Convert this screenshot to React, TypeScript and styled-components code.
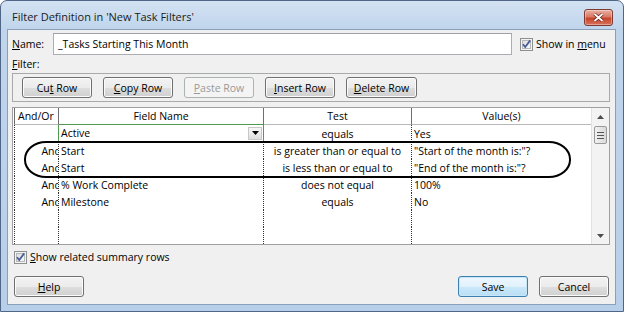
import React from "react";
import styled, { createGlobalStyle, css } from "styled-components";

const GlobalStyle = createGlobalStyle`
  html, body { margin: 0; padding: 0; background: #ffffff; }
  body {
    font-family: "Open Sans", "Noto Sans", "DejaVu Sans", sans-serif;
    font-size: 10.5px;
    color: #000;
  }
  * { box-sizing: border-box; }
`;

interface Row {
  andOr: string;
  field: string;
  test: string;
  value: string;
  active?: boolean;
}

const rows: Row[] = [
  { andOr: "", field: "Active", test: "equals", value: "Yes", active: true },
  { andOr: "And", field: "Start", test: "is greater than or equal to", value: "\"Start of the month is:\"?" },
  { andOr: "And", field: "Start", test: "is less than or equal to", value: "\"End of the month is:\"?" },
  { andOr: "And", field: "% Work Complete", test: "does not equal", value: "100%" },
  { andOr: "And", field: "Milestone", test: "equals", value: "No" },
  { andOr: "", field: "", test: "", value: "" },
  { andOr: "", field: "", test: "", value: "" },
];

const Checkbox = () => (
  <svg width="13" height="13" viewBox="0 0 13 13">
    <defs>
      <linearGradient id="cbg" x1="0" y1="0" x2="1" y2="1">
        <stop offset="0" stopColor="#dcdcdc" />
        <stop offset="1" stopColor="#fbfbfb" />
      </linearGradient>
    </defs>
    <rect x="0.5" y="0.5" width="12" height="12" fill="#f4f4f4" stroke="#8e8f8f" />
    <rect x="2.5" y="2.5" width="8" height="8" fill="url(#cbg)" stroke="#b5b8bc" />
    <path d="M3 6.2 L5.2 9 L10.2 2.4" fill="none" stroke="#4a5f97" strokeWidth="1.8" />
  </svg>
);

const App = () => {
  return (
    <>
      <GlobalStyle />
      <Window>
        <TitleBar>
          <Title>Filter Definition in 'New Task Filters'</Title>
          <CloseButton>
            <svg width="11" height="9" viewBox="0 0 11 9">
              <path d="M1.5 1 L9.5 8 M9.5 1 L1.5 8" stroke="#5a1a12" strokeWidth="3.2" />
              <path d="M1.5 1 L9.5 8 M9.5 1 L1.5 8" stroke="#ffffff" strokeWidth="1.8" />
            </svg>
          </CloseButton>
        </TitleBar>
        <Body>
          <NameRow>
            <NameLabel><Key>N</Key>ame:</NameLabel>
            <NameInput>_Tasks Starting This Month</NameInput>
            <CheckLabel $ml={8}>
              <Checkbox />
              <span>Show in <Key>m</Key>enu</span>
            </CheckLabel>
          </NameRow>
          <FilterLabel><Key>F</Key>ilter:</FilterLabel>
          <Toolbar>
            <Button><span>Cu<Key>t</Key> Row</span></Button>
            <Button><span><Key>C</Key>opy Row</span></Button>
            <Button $disabled><span><Key>P</Key>aste Row</span></Button>
            <Button><span><Key>I</Key>nsert Row</span></Button>
            <Button $w={71}><span><Key>D</Key>elete Row</span></Button>
          </Toolbar>
          <GridBox>
            <Table>
              <HeadCell $align="left" $first>And/Or</HeadCell>
              <HeadCell $green>Field Name</HeadCell>
              <HeadCell>Test</HeadCell>
              <HeadCell $last>Value(s)</HeadCell>
              {rows.map((r, i) => (
                <React.Fragment key={i}>
                  <AndCell>
                    <span>{r.andOr}</span>
                  </AndCell>
                  {r.active ? (
                    <ActiveCell>
                      <span>{r.field}</span>
                      <DropButton>
                        <svg width="7" height="4" viewBox="0 0 7 4">
                          <path d="M0 0 H7 L3.5 4 Z" fill="#000" />
                        </svg>
                      </DropButton>
                    </ActiveCell>
                  ) : (
                    <Cell>{r.field}</Cell>
                  )}
                  <Cell $align="center">{r.test}</Cell>
                  <Cell $last>{r.value}</Cell>
                </React.Fragment>
              ))}
            </Table>
            <ScrollBar>
              <ScrollArrow>
                <svg width="7" height="4" viewBox="0 0 7 4">
                  <path d="M0 4 H7 L3.5 0 Z" fill="#4d4d4d" />
                </svg>
              </ScrollArrow>
              <Thumb>
                <Grip />
                <Grip />
                <Grip />
              </Thumb>
              <Spacer />
              <ScrollArrow>
                <svg width="7" height="4" viewBox="0 0 7 4">
                  <path d="M0 0 H7 L3.5 4 Z" fill="#4d4d4d" />
                </svg>
              </ScrollArrow>
            </ScrollBar>
            <Highlight />
          </GridBox>
          <SummaryRow>
            <CheckLabel>
              <Checkbox />
              <span><Key>S</Key>how related summary rows</span>
            </CheckLabel>
          </SummaryRow>
          <Footer>
            <Button $w={70}><span><Key>H</Key>elp</span></Button>
            <FooterRight>
              <Button $w={70} $default>Save</Button>
              <Button $w={70}>Cancel</Button>
            </FooterRight>
          </Footer>
        </Body>
      </Window>
    </>
  );
};

export default App;

const Window = styled.div`
  width: 624px;
  height: 312px;
  display: flex;
  flex-direction: column;
  border: 1px solid #4f6686;
  border-radius: 7px 7px 0 0;
  padding: 0 7px 6px 6px;
  background: linear-gradient(#d3e2f3 0px, #c0d5ec 28px, #b8cfe9 100%);
`;

const TitleBar = styled.div`
  height: 28px;
  display: flex;
  align-items: flex-start;
  padding-left: 5px;
`;

const Title = styled.div`
  margin-top: 8px;
  font-size: 11px;
  color: #1b1b1b;
`;

const CloseButton = styled.div`
  margin-left: auto;
  margin-right: 3px;
  margin-top: 8px;
  width: 29px;
  height: 17px;
  border: 1px solid #7d3a30;
  border-radius: 3px;
  display: flex;
  align-items: center;
  justify-content: center;
  background: linear-gradient(#eab0a2 0%, #d97a66 45%, #c8432c 55%, #d9735a 100%);
  box-shadow: inset 0 0 0 1px rgba(255, 255, 255, 0.35);
`;

const Body = styled.div`
  flex: 1;
  display: flex;
  flex-direction: column;
  background: #f0f0f0;
  border: 1px solid #8a9fb9;
  padding: 3px 5px 7px 4px;
`;

const Key = styled.span`
  text-decoration: underline;
`;

const NameRow = styled.div`
  height: 22px;
  display: flex;
  align-items: center;
`;

const NameLabel = styled.div`
  width: 41px;
`;

const NameInput = styled.div`
  width: 459px;
  height: 22px;
  background: #fff;
  border: 1px solid #abadb3;
  border-top-color: #9da0a6;
  padding-left: 4px;
  display: flex;
  align-items: center;
`;

const CheckLabel = styled.label<{ $ml?: number }>`
  display: flex;
  align-items: center;
  gap: 3px;
  white-space: nowrap;
  margin-left: ${(p) => p.$ml ?? 0}px;
  svg { flex-shrink: 0; }
`;

const FilterLabel = styled.div`
  margin-top: 2px;
  height: 14px;
  line-height: 14px;
`;

const Toolbar = styled.div`
  margin-top: 2px;
  height: 29px;
  border: 1px solid #a9a9a9;
  display: flex;
  align-items: center;
  gap: 11px;
  padding: 0 9px;
`;

const Button = styled.div<{ $w?: number; $disabled?: boolean; $default?: boolean }>`
  width: ${(p) => p.$w ?? 70}px;
  height: 21px;
  border: 1px solid #707070;
  border-radius: 3px;
  display: flex;
  align-items: center;
  justify-content: center;
  white-space: nowrap;
  background: linear-gradient(#f3f3f3 0%, #ebebeb 50%, #dedede 51%, #d0d0d0 100%);
  box-shadow: inset 0 0 0 1px #fbfbfb;
  color: #000;
  ${(p) =>
    p.$disabled &&
    css`
      border-color: #adb2b5;
      background: #f4f4f4;
      color: #9a9a9a;
      box-shadow: none;
    `}
  ${(p) =>
    p.$default &&
    css`
      border-color: #3c7fb1;
      background: linear-gradient(#eef7fd 0%, #e1f1fc 50%, #cbe8fa 51%, #b9def5 100%);
      box-shadow: inset 0 0 0 1px #c7e6f8;
    `}
`;

const GridBox = styled.div`
  position: relative;
  margin-top: 5px;
  height: 138px;
  border: 1px solid #a0a0a0;
  background: #fff;
  display: flex;
  overflow: hidden;
`;

const Table = styled.div`
  flex: 1;
  display: grid;
  grid-template-columns: 45px 205px 148px 1fr;
  grid-auto-rows: 17px;
  padding-left: 1px;
  align-content: start;
`;

const HeadCell = styled.div<{ $align?: string; $first?: boolean; $last?: boolean; $green?: boolean }>`
  display: flex;
  align-items: center;
  justify-content: ${(p) => (p.$align === "left" ? "flex-start" : "center")};
  padding-left: ${(p) => (p.$align === "left" ? 3 : 0)}px;
  border-right: ${(p) => (p.$last ? "none" : "1px solid #6f6f6f")};
  border-left: ${(p) => (p.$first ? "1px solid #6f6f6f" : "none")};
  border-bottom: 1px solid ${(p) => (p.$green ? "#4f9a4f" : "#b8b8b8")};
  white-space: nowrap;
`;

const Cell = styled.div<{ $align?: string; $last?: boolean }>`
  display: flex;
  align-items: center;
  justify-content: ${(p) =>
    p.$align === "center" ? "center" : p.$align === "right" ? "flex-end" : "flex-start"};
  padding: 0 2px;
  border-right: ${(p) => (p.$last ? "none" : "1px dotted #333")};
  white-space: nowrap;
  overflow: hidden;
`;

const AndCell = styled.div`
  display: flex;
  align-items: center;
  justify-content: flex-end;
  border-left: 1px dotted #333;
  border-right: 1px dotted #333;
  overflow: hidden;
  white-space: nowrap;
  span { margin-right: -3px; }
`;

const ActiveCell = styled.div`
  display: flex;
  align-items: center;
  justify-content: space-between;
  padding: 0 1px 0 2px;
  margin-left: -1px;
  border: 1px solid #4f9a4f;
  border-top: none;
`;

const DropButton = styled.div`
  width: 14px;
  height: 13px;
  border: 1px solid #c7c7c7;
  background: linear-gradient(#f7f7f7, #dedede);
  display: flex;
  align-items: center;
  justify-content: center;
`;

const ScrollBar = styled.div`
  width: 18px;
  display: flex;
  flex-direction: column;
  align-items: center;
  background: #f3f3f3;
  border-left: 1px solid #e2e2e2;
`;

const ScrollArrow = styled.div`
  height: 17px;
  width: 100%;
  display: flex;
  align-items: center;
  justify-content: center;
`;

const Thumb = styled.div`
  width: 13px;
  height: 18px;
  margin-top: 1px;
  border: 1px solid #9a9a9a;
  border-radius: 2px;
  background: linear-gradient(90deg, #f1f1f1, #dadada);
  display: flex;
  flex-direction: column;
  align-items: center;
  justify-content: center;
  gap: 2px;
`;

const Grip = styled.div`
  width: 7px;
  height: 1px;
  background: #555;
`;

const Spacer = styled.div`
  flex: 1;
`;

const Highlight = styled.div`
  position: absolute;
  left: 11px;
  top: 33px;
  width: 547px;
  height: 37px;
  border: 2.5px solid #000;
  border-radius: 22px / 18px;
  pointer-events: none;
`;

const SummaryRow = styled.div`
  margin-top: 4px;
  height: 16px;
  display: flex;
  align-items: center;
  padding-left: 2px;
`;

const Footer = styled.div`
  margin-top: auto;
  display: flex;
  align-items: center;
  padding-left: 2px;
`;

const FooterRight = styled.div`
  margin-left: auto;
  display: flex;
  gap: 11px;
  margin-right: 1px;
`;
